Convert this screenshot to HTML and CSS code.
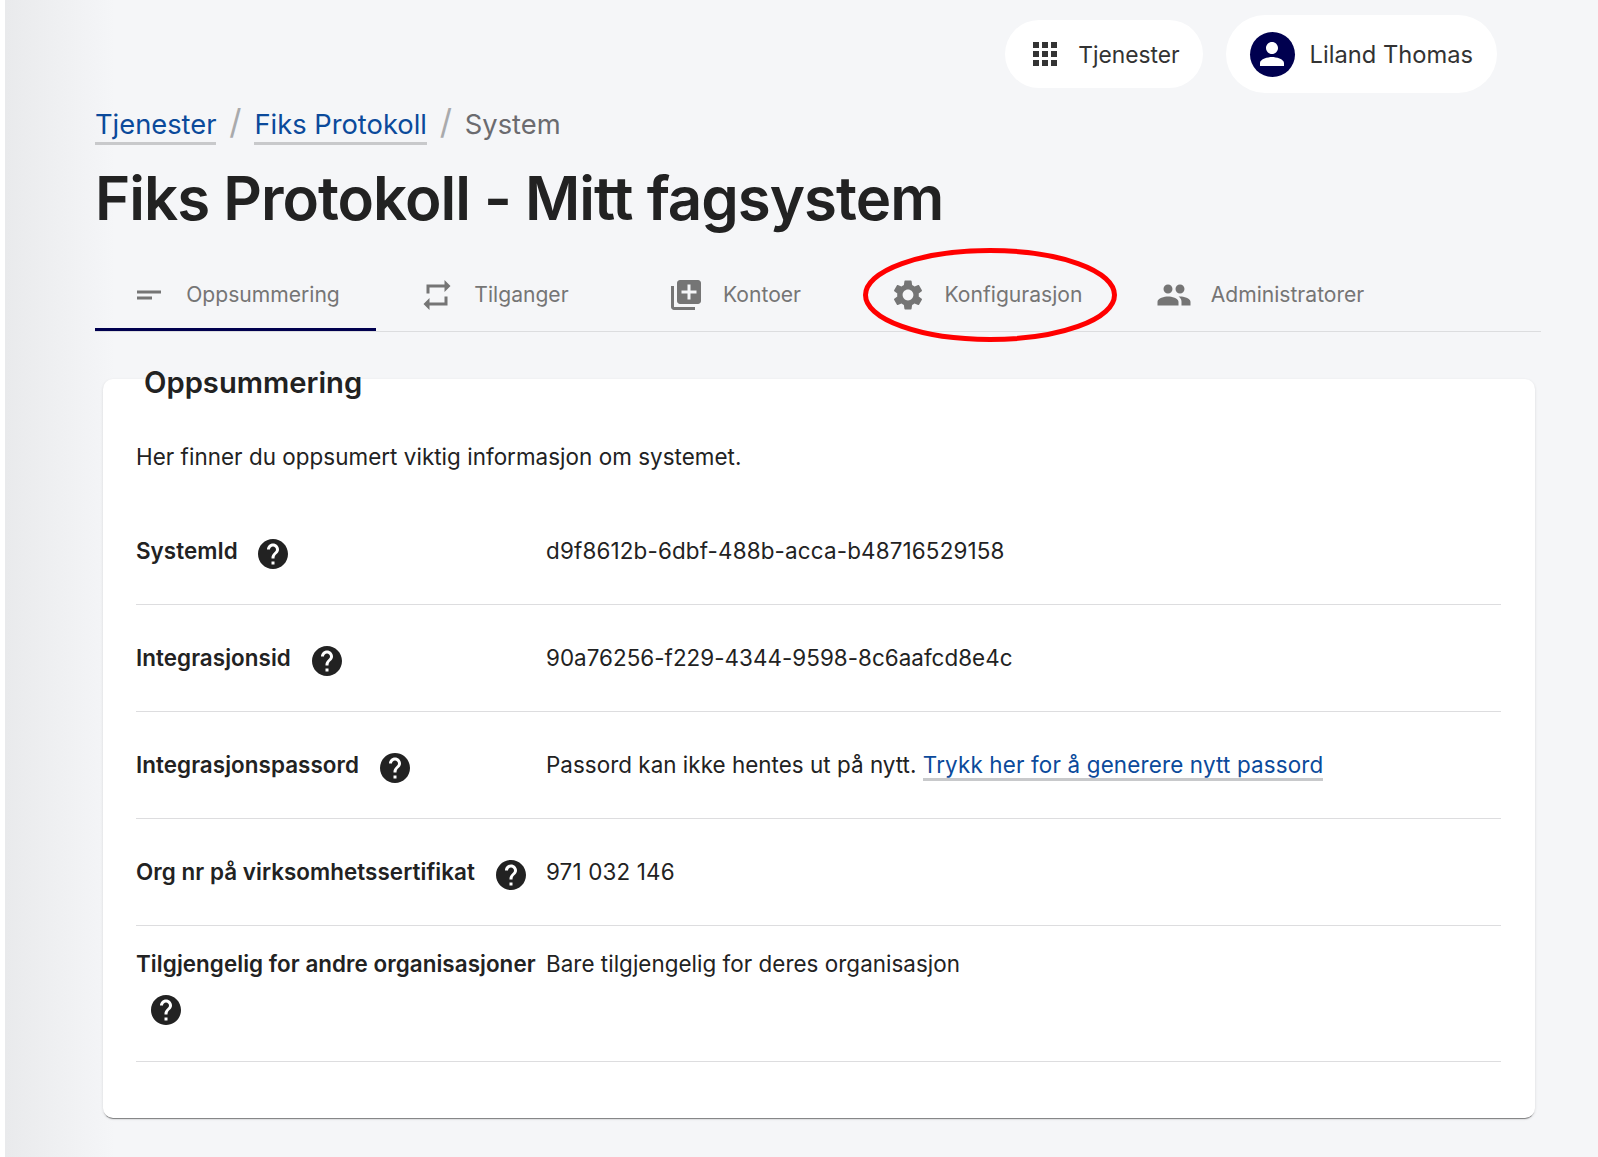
FILE: index.html
```html
<!DOCTYPE html>
<html lang="nb">
<head>
    <meta charset="UTF-8">
    <title>Fiks Protokoll - Mitt fagsystem</title>
    <link rel="stylesheet" href="styles.css">
</head>
<body>
<div class="page">
    <header class="topbar">
        <a class="pill pill-services">
            <svg class="icon" viewBox="0 0 24 24"><path d="M4 8h4V4H4v4zm6 12h4v-4h-4v4zm-6 0h4v-4H4v4zm0-6h4v-4H4v4zm6 0h4v-4h-4v4zm6-10v4h4V4h-4zm-6 4h4V4h-4v4zm6 6h4v-4h-4v4zm0 6h4v-4h-4v4z"/></svg>
            <span>Tjenester</span>
        </a>
        <a class="pill pill-user">
            <span class="avatar">
                <svg class="icon" viewBox="0 0 24 24"><path d="M12 12c2.21 0 4-1.79 4-4s-1.79-4-4-4-4 1.79-4 4 1.79 4 4 4zm0 2c-2.67 0-8 1.34-8 4v2h16v-2c0-2.66-5.33-4-8-4z"/></svg>
            </span>
            <span>Liland Thomas</span>
        </a>
    </header>

    <nav class="crumbs">
        <a href="#">Tjenester</a>
        <span class="slash">/</span>
        <a href="#">Fiks Protokoll</a>
        <span class="slash">/</span>
        <span class="crumb-current">System</span>
    </nav>

    <h1 class="title">Fiks Protokoll - Mitt fagsystem</h1>

    <div class="tabs">
        <a class="tab active">
            <svg class="icon" viewBox="0 0 24 24"><path d="M4 9h16v2H4zm0 4h10v2H4z"/></svg>
            <span>Oppsummering</span>
        </a>
        <a class="tab">
            <svg class="icon" viewBox="0 0 24 24"><path d="M7 7h10v3l4-4-4-4v3H5v6h2V7zm10 10H7v-3l-4 4 4 4v-3h12v-6h-2v4z"/></svg>
            <span>Tilganger</span>
        </a>
        <a class="tab">
            <svg class="icon" viewBox="0 0 24 24"><path d="M4 6H2v14c0 1.1.9 2 2 2h14v-2H4V6zm16-4H8c-1.1 0-2 .9-2 2v12c0 1.1.9 2 2 2h12c1.1 0 2-.9 2-2V4c0-1.1-.9-2-2-2zm-1 9h-4v4h-2v-4H9V9h4V5h2v4h4v2z"/></svg>
            <span>Kontoer</span>
        </a>
        <a class="tab tab-marked">
            <svg class="icon" viewBox="0 0 24 24"><path d="M19.14 12.94c.04-.3.06-.61.06-.94 0-.32-.02-.64-.07-.94l2.03-1.58c.18-.14.23-.41.12-.61l-1.92-3.32c-.12-.22-.37-.29-.59-.22l-2.39.96c-.5-.38-1.03-.7-1.62-.94l-.36-2.54c-.04-.24-.24-.41-.48-.41h-3.84c-.24 0-.43.17-.47.41l-.36 2.54c-.59.24-1.13.57-1.62.94l-2.39-.96c-.22-.08-.47 0-.59.22L2.74 8.87c-.12.21-.08.47.12.61l2.03 1.58c-.05.3-.09.63-.09.94s.02.64.07.94l-2.03 1.58c-.18.14-.23.41-.12.61l1.92 3.32c.12.22.37.29.59.22l2.39-.96c.5.38 1.03.7 1.62.94l.36 2.54c.05.24.24.41.48.41h3.84c.24 0 .44-.17.47-.41l.36-2.54c.59-.24 1.13-.56 1.62-.94l2.39.96c.22.08.47 0 .59-.22l1.92-3.32c.12-.22.07-.47-.12-.61l-2.01-1.58zM12 15.6c-1.98 0-3.6-1.62-3.6-3.6s1.62-3.6 3.6-3.6 3.6 1.62 3.6 3.6-1.62 3.6-3.6 3.6z"/></svg>
            <span>Konfigurasjon</span>
            <svg class="ring" viewBox="0 0 254 94"><ellipse cx="127" cy="47" rx="124.5" ry="44.5"/></svg>
        </a>
        <a class="tab">
            <svg class="icon" viewBox="0 0 24 24"><path d="M16 11c1.66 0 2.99-1.34 2.99-3S17.66 5 16 5c-1.66 0-3 1.34-3 3s1.34 3 3 3zm-8 0c1.66 0 2.99-1.34 2.99-3S9.66 5 8 5C6.34 5 5 6.34 5 8s1.34 3 3 3zm0 2c-2.33 0-7 1.17-7 3.5V19h14v-2.5c0-2.33-4.67-3.5-7-3.5zm8 0c-.29 0-.62.02-.97.05 1.16.84 1.97 1.97 1.97 3.45V19h6v-2.5c0-2.33-4.67-3.5-7-3.5z"/></svg>
            <span>Administratorer</span>
        </a>
    </div>

    <section class="card">
        <h2 class="card-title">Oppsummering</h2>
        <p class="intro">Her finner du oppsumert viktig informasjon om systemet.</p>
        <table class="info">
            <tr>
                <th>SystemId <button class="help"><svg class="icon" viewBox="0 0 24 24"><path d="M12 2C6.48 2 2 6.48 2 12s4.48 10 10 10 10-4.48 10-10S17.52 2 12 2zm1 17h-2v-2h2v2zm2.07-7.75l-.9.92C13.45 12.9 13 13.5 13 15h-2v-.5c0-1.1.45-2.1 1.17-2.83l1.24-1.26c.37-.36.59-.86.59-1.41 0-1.1-.9-2-2-2s-2 .9-2 2H8c0-2.21 1.79-4 4-4s4 1.79 4 4c0 .88-.36 1.68-.93 2.25z"/></svg></button></th>
                <td class="wide">d9f8612b-6dbf-488b-acca-b48716529158</td>
            </tr>
            <tr>
                <th>Integrasjonsid <button class="help"><svg class="icon" viewBox="0 0 24 24"><path d="M12 2C6.48 2 2 6.48 2 12s4.48 10 10 10 10-4.48 10-10S17.52 2 12 2zm1 17h-2v-2h2v2zm2.07-7.75l-.9.92C13.45 12.9 13 13.5 13 15h-2v-.5c0-1.1.45-2.1 1.17-2.83l1.24-1.26c.37-.36.59-.86.59-1.41 0-1.1-.9-2-2-2s-2 .9-2 2H8c0-2.21 1.79-4 4-4s4 1.79 4 4c0 .88-.36 1.68-.93 2.25z"/></svg></button></th>
                <td>90a76256-f229-4344-9598-8c6aafcd8e4c</td>
            </tr>
            <tr>
                <th>Integrasjonspassord <button class="help"><svg class="icon" viewBox="0 0 24 24"><path d="M12 2C6.48 2 2 6.48 2 12s4.48 10 10 10 10-4.48 10-10S17.52 2 12 2zm1 17h-2v-2h2v2zm2.07-7.75l-.9.92C13.45 12.9 13 13.5 13 15h-2v-.5c0-1.1.45-2.1 1.17-2.83l1.24-1.26c.37-.36.59-.86.59-1.41 0-1.1-.9-2-2-2s-2 .9-2 2H8c0-2.21 1.79-4 4-4s4 1.79 4 4c0 .88-.36 1.68-.93 2.25z"/></svg></button></th>
                <td>Passord kan ikke hentes ut på nytt. <a class="link" href="#">Trykk her for å generere nytt passord</a></td>
            </tr>
            <tr>
                <th>Org nr på virksomhetssertifikat <button class="help"><svg class="icon" viewBox="0 0 24 24"><path d="M12 2C6.48 2 2 6.48 2 12s4.48 10 10 10 10-4.48 10-10S17.52 2 12 2zm1 17h-2v-2h2v2zm2.07-7.75l-.9.92C13.45 12.9 13 13.5 13 15h-2v-.5c0-1.1.45-2.1 1.17-2.83l1.24-1.26c.37-.36.59-.86.59-1.41 0-1.1-.9-2-2-2s-2 .9-2 2H8c0-2.21 1.79-4 4-4s4 1.79 4 4c0 .88-.36 1.68-.93 2.25z"/></svg></button></th>
                <td class="wide">971 032 146</td>
            </tr>
            <tr>
                <th>Tilgjengelig for andre organisasjoner <button class="help"><svg class="icon" viewBox="0 0 24 24"><path d="M12 2C6.48 2 2 6.48 2 12s4.48 10 10 10 10-4.48 10-10S17.52 2 12 2zm1 17h-2v-2h2v2zm2.07-7.75l-.9.92C13.45 12.9 13 13.5 13 15h-2v-.5c0-1.1.45-2.1 1.17-2.83l1.24-1.26c.37-.36.59-.86.59-1.41 0-1.1-.9-2-2-2s-2 .9-2 2H8c0-2.21 1.79-4 4-4s4 1.79 4 4c0 .88-.36 1.68-.93 2.25z"/></svg></button></th>
                <td>Bare tilgjengelig for deres organisasjon</td>
            </tr>
        </table>
    </section>
</div>
</body>
</html>
```

FILE: styles.css
```css
* {
    box-sizing: border-box;
}

html, body {
    height: 100%;
}

body {
    margin: 0;
    background: #fff;
    font-family: Inter, "Liberation Sans", sans-serif;
    color: #222;
    overflow: hidden;
}

.page {
    margin-left: 5px;
    height: 1157px;
    padding: 15px 57px 0 90px;
    background: linear-gradient(to right, #e9eaec, #f5f6f8 110px);
}

.icon {
    display: block;
    width: 36px;
    height: 36px;
    fill: currentColor;
}

/* top bar */
.topbar {
    display: flex;
    justify-content: flex-end;
    align-items: center;
    gap: 23px;
    padding-right: 44px;
}

.pill {
    display: flex;
    align-items: center;
    background: #fff;
    border-radius: 40px;
    font-size: 22.8px;
    color: #333;
}

.pill-services {
    height: 68px;
    padding: 0 23px 0 22px;
    gap: 15px;
}

.pill-user {
    height: 78px;
    padding: 0 24px;
    gap: 15px;
    font-size: 23.7px;
}

.avatar {
    display: flex;
    align-items: center;
    justify-content: center;
    width: 45px;
    height: 45px;
    border-radius: 50%;
    background: #00004f;
    color: #fff;
}

/* breadcrumbs */
.crumbs {
    display: flex;
    align-items: baseline;
    margin-top: 7px;
    font-size: 27.3px;
    line-height: 44px;
}

.crumbs a {
    color: #0b4a9b;
    text-decoration: none;
    border-bottom: 3px solid #c8c9cb;
    line-height: 34px;
}

.slash {
    width: 38px;
    text-align: center;
    font-size: 34px;
    color: #a9aaac;
}

.crumb-current {
    color: #6b6b6f;
}

.title {
    margin: 13px 0 0;
    font-size: 60px;
    line-height: 76px;
    font-weight: 600;
    letter-spacing: -1px;
    color: #222;
}

/* tabs */
.tabs {
    display: grid;
    grid-template-columns: 281px 236px 245px 258px 290px;
    margin-top: 23px;
    height: 73px;
    border-bottom: 1px solid #dcdddf;
}

.tab {
    position: relative;
    display: flex;
    align-items: center;
    justify-content: center;
    gap: 19px;
    height: 72px;
    padding: 2px 0 3px;
    font-size: 21.1px;
    color: #757575;
}

.tab.active {
    border-bottom: 3px solid #00004f;
    padding-bottom: 0;
}

.ring {
    position: absolute;
    left: 6px;
    top: -11px;
    width: 254px;
    height: 94px;
    fill: none;
    stroke: #f00;
    stroke-width: 5;
}

/* card */
.card {
    display: flow-root;
    margin: 47px 6px 0 8px;
    height: 739px;
    padding: 0 34px 0 33px;
    background: #fff;
    border-radius: 10px;
    box-shadow: 0 2px 1px -1px rgba(0, 0, 0, .45), 0 1px 3px rgba(0, 0, 0, .12);
}

.card-title {
    margin: -13px 0 0 8px;
    font-size: 29.2px;
    line-height: 34px;
    font-weight: 600;
    color: #222;
}

.intro {
    margin: 42px 0 26px;
    font-size: 22.4px;
    line-height: 30px;
    letter-spacing: .05px;
}

.info {
    width: 100%;
    border-collapse: collapse;
    font-size: 22.4px;
    line-height: 30px;
    letter-spacing: .04px;
}

.info tr {
    border-bottom: 1px solid #dddddf;
}

.info th, .info td {
    padding: 25px 0 21px;
    text-align: left;
    vertical-align: baseline;
}

.info tr:last-child th, .info tr:last-child td {
    padding: 23px 0 22px;
}

.info th {
    width: 410px;
    padding-right: 4px;
    font-weight: 600;
    letter-spacing: .06px;
}

.info .wide {
    letter-spacing: .17px;
}

.help {
    display: inline-block;
    vertical-align: middle;
    padding: 12.5px 12px 11.5px;
    border: 0;
    background: none;
    color: #222;
}

.link {
    color: #0b4a9b;
    text-decoration: none;
    border-bottom: 3px solid #c8c9cb;
    letter-spacing: .17px;
}
```
